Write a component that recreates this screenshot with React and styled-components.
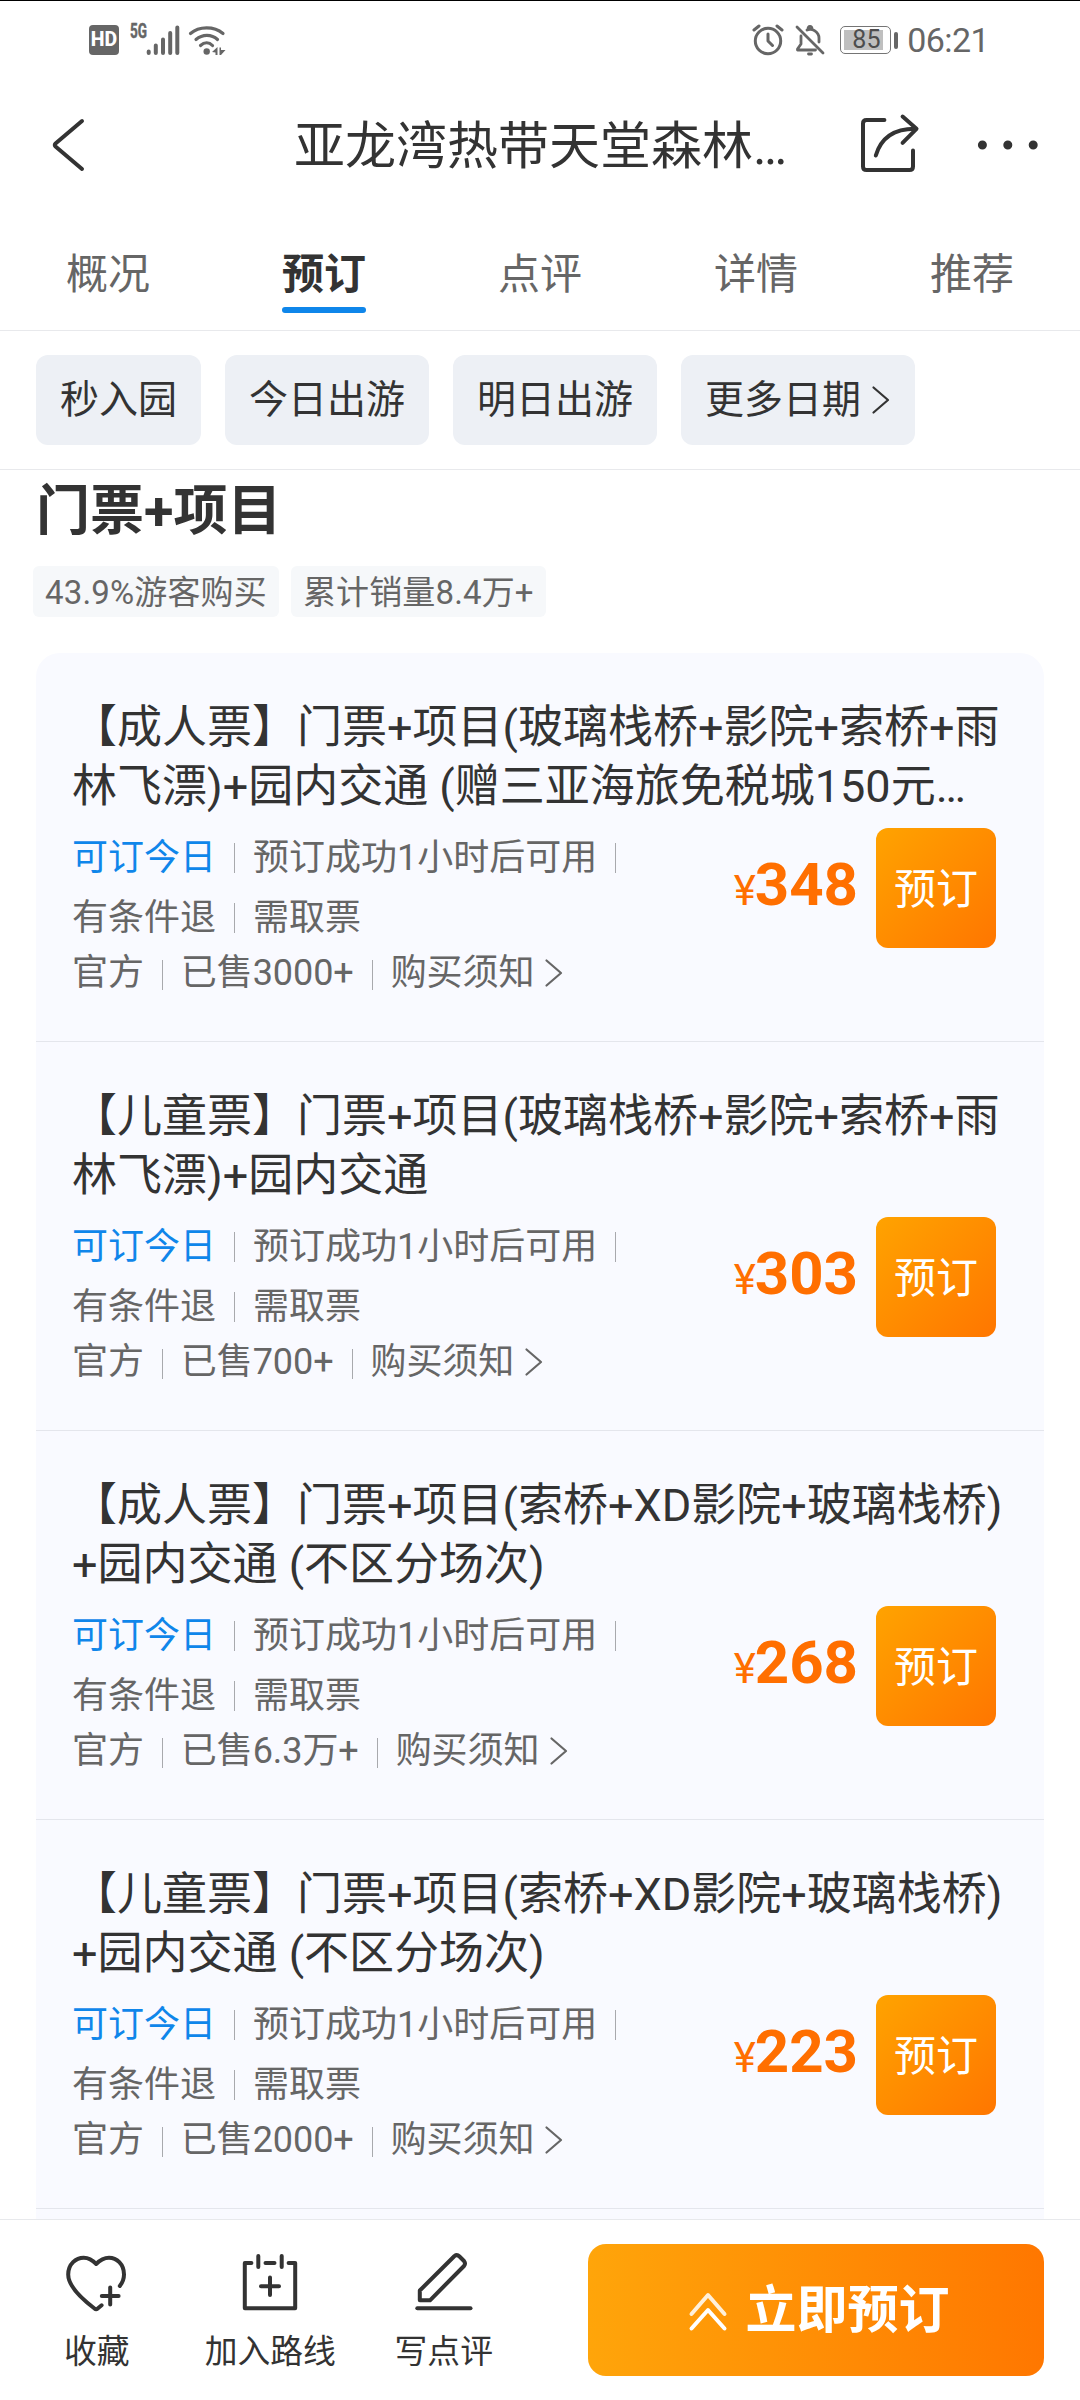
import React from 'react';
import styled, { createGlobalStyle } from 'styled-components';

const vars = {
  text: '#333',
  gray: '#666',
  blue: '#0f86ea',
  orange: '#ff6f00',
  line: '#e8e9ec',
  card: '#f9faff',
};

const GlobalStyle = createGlobalStyle`
  body {
    margin: 0;
    background: #fff;
    color: ${vars.text};
    font-family: Roboto, 'Noto Sans CJK SC', sans-serif;
  }

  * {
    box-sizing: border-box;
  }
`;

const Screen = styled.div`
  display: flex;
  flex-direction: column;
  width: 1080px;
  height: 2400px;
  overflow: hidden;
  border-top: 1px solid #000;
`;

const Icon = styled.svg`
  display: block;
  flex: none;
  overflow: visible;
  fill: none;
  stroke: ${props => props.$color || vars.text};
  stroke-width: ${props => props.$stroke || 4};
  stroke-linecap: round;
  stroke-linejoin: round;
`;

const StatusBar = styled.div`
  display: flex;
  justify-content: space-between;
  align-items: center;
  flex: none;
  height: 78px;
  padding: 0 91px 0 89px;
  color: ${vars.gray};
`;

const StatusGroup = styled.div`
  display: flex;
  align-items: center;
`;

const MutedIcon = styled(Icon)`
  margin: 0 14px 0 10px;
`;

const HdBadge = styled.div`
  width: 30px;
  height: 30px;
  margin-right: 11px;
  border-radius: 4px;
  background: ${vars.gray};
  color: #fff;
  font-size: 19.5px;
  font-weight: 800;
  line-height: 30px;
  text-align: center;
`;

const Battery = styled.div`
  display: flex;
  align-items: center;
  margin-right: 9px;

  &::after {
    content: '';
    width: 4px;
    height: 17px;
    margin-left: 3px;
    border-radius: 2px;
    background: ${vars.gray};
  }
`;

const BatteryBody = styled.div`
  width: 51px;
  height: 28px;
  padding: 3px;
  border: 1px solid #757575;
  border-radius: 5px;
`;

const BatteryLevel = styled.div`
  width: 39px;
  height: 20px;
  padding-left: 8px;
  background: #bfbfbf;
  color: #4d4d4d;
  font-size: 25px;
  line-height: 20px;
`;

const Clock = styled.span`
  font-size: 34px;
  line-height: 40px;
  letter-spacing: -0.6px;
`;

const Header = styled.header`
  display: grid;
  grid-template-columns: 222px 636px 222px;
  align-items: center;
  flex: none;
  height: 132px;
`;

const BackButton = styled.div`
  padding-left: 48px;
`;

const HeaderTitle = styled.div`
  margin-top: 3px;
  padding-left: 1px;
  font-size: 51px;
  line-height: 72px;
  text-align: center;
  white-space: nowrap;
`;

const HeaderActions = styled.div`
  display: flex;
  align-items: center;
  gap: 54px;
`;

const Tabs = styled.nav`
  display: flex;
  flex: none;
  height: 120px;
  padding-top: 34px;
  border-bottom: 1px solid ${vars.line};
`;

const Tab = styled.div`
  display: flex;
  flex-direction: column;
  align-items: center;
  width: 216px;
  font-size: 42px;
  line-height: 60px;
  font-weight: ${props => (props.$active ? 'bold' : 'normal')};
  color: ${props => (props.$active ? vars.text : vars.gray)};

  &::after {
    content: '';
    width: 84px;
    height: 6px;
    margin-top: 2px;
    border-radius: 3px;
    background: ${props => (props.$active ? vars.blue : 'transparent')};
  }
`;

const Filters = styled.div`
  display: flex;
  flex: none;
  gap: 24px;
  padding: 24px 36px;
  border-bottom: 1px solid ${vars.line};
`;

const Chip = styled.div`
  display: flex;
  align-items: center;
  height: 90px;
  padding: 0 24px;
  border-radius: 12px;
  background: #edf0f5;
  font-size: 39px;
  line-height: 90px;
`;

const Content = styled.main`
  display: flex;
  flex-direction: column;
  flex: 1;
  min-height: 0;
  padding: 9px 36px 0;
  overflow: hidden;
`;

const SectionTitle = styled.h2`
  margin: 0;
  font-size: 54px;
  font-weight: bold;
  line-height: 66px;
`;

const Tags = styled.div`
  display: flex;
  gap: 12px;
  margin: 21px 0 36px -3px;
`;

const Tag = styled.span`
  height: 51px;
  padding: 0 12px;
  border-radius: 6px;
  background: #f6f8fa;
  color: ${vars.gray};
  font-size: 33px;
  line-height: 53px;
  letter-spacing: 0.15px;
`;

const TicketList = styled.div`
  flex: 1;
  border-radius: 24px 24px 0 0;
  background: ${vars.card};
`;

const Ticket = styled.div`
  height: 389px;
  padding: 45px 48px 0 36px;
  border-bottom: 1px solid #e4e6ec;
`;

const TicketTitle = styled.div`
  font-size: 45px;
  line-height: 59px;
  white-space: nowrap;
`;

const TicketBody = styled.div`
  display: flex;
  justify-content: space-between;
  margin-top: 12px;
`;

const MetaRow = styled.div`
  display: flex;
  align-items: center;
  height: ${props => props.$height || 60}px;
  color: ${vars.gray};
  font-size: 36px;
  line-height: 54px;
  white-space: nowrap;
`;

const MetaText = styled.span`
  color: ${props => (props.$highlight ? vars.blue : 'inherit')};
`;

const NoteText = styled(MetaText)`
  display: flex;
  align-items: center;
  padding-bottom: 5px;
  letter-spacing: -0.08px;
`;

const Divider = styled.i`
  width: 1px;
  height: 30px;
  margin: 0 18px;
  background: #a8a9ad;
`;

const Purchase = styled.div`
  display: flex;
  gap: 18px;
`;

const Price = styled.div`
  color: ${vars.orange};
  font-size: 60px;
  font-weight: bold;
  line-height: 113px;
`;

const Currency = styled.span`
  margin-right: -1px;
  font-size: 42px;
  font-weight: normal;
`;

const BookButton = styled.div`
  width: 120px;
  height: 120px;
  border-radius: 12px;
  background: linear-gradient(135deg, #ffa300, #ff7600);
  color: #fff;
  font-size: 42px;
  line-height: 124px;
  text-align: center;
`;

const Footer = styled.footer`
  display: flex;
  justify-content: space-between;
  flex: none;
  height: 181px;
  padding: 0 36px 0 10px;
  border-top: 1px solid ${vars.line};
`;

const FooterActions = styled.div`
  display: flex;
  padding-top: 32px;
`;

const FooterAction = styled.div`
  display: flex;
  flex-direction: column;
  align-items: center;
  gap: 20px;
  width: 173.5px;
  font-size: 32.8px;
  line-height: 40px;
`;

const SubmitButton = styled.div`
  display: flex;
  align-items: center;
  justify-content: center;
  gap: 18px;
  width: 456px;
  height: 132px;
  margin-top: 24px;
  padding: 2px 0 0 7px;
  border-radius: 18px;
  background: linear-gradient(90deg, #ffa50a, #ff7700);
  color: #fff;
  font-size: 51px;
  font-weight: bold;
  line-height: 72px;
`;

const tabs = ['概况', '预订', '点评', '详情', '推荐'];

const tickets = [
  {
    title: ['【成人票】门票+项目(玻璃栈桥+影院+索桥+雨', '林飞漂)+园内交通 (赠三亚海旅免税城150元…'],
    sold: '已售3000+',
    price: 348,
  },
  {
    title: ['【儿童票】门票+项目(玻璃栈桥+影院+索桥+雨', '林飞漂)+园内交通'],
    sold: '已售700+',
    price: 303,
  },
  {
    title: ['【成人票】门票+项目(索桥+XD影院+玻璃栈桥)', '+园内交通 (不区分场次)'],
    sold: '已售6.3万+',
    price: 268,
  },
  {
    title: ['【儿童票】门票+项目(索桥+XD影院+玻璃栈桥)', '+园内交通 (不区分场次)'],
    sold: '已售2000+',
    price: 223,
  },
];

function Chevron({ color }) {
  return (
    <Icon width="30" height="30" viewBox="0 0 30 30" $stroke={2.2} $color={color}>
      <path d="M12.5 2.5L27 15L12.5 27.5" />
    </Icon>
  );
}

function SignalIcons() {
  return (
    <Icon width="98" height="32" viewBox="0 0 98 32" $color={vars.gray}>
      <text
        x="0"
        y="14"
        fill={vars.gray}
        stroke={vars.gray}
        strokeWidth="0.5"
        fontSize="19.5"
        fontWeight="bold"
        textLength="17"
        lengthAdjust="spacingAndGlyphs"
      >
        5G
      </text>
      <path d="M18.7 27.5V29M25.8 21.5V29M33 15.5V29M40.2 9V29M47.3 3.5V29" />
      <path
        strokeWidth="3.2"
        d="M60.5 9.5C69 2 84 2 93 9.5M66 15.5C72.5 10 81.5 10 87.5 15.5M70.5 21.5C74.5 17.8 79 17.8 82.5 21.5"
      />
      <circle cx="76.7" cy="27.5" r="3.2" fill={vars.gray} stroke="none" />
      <path
        stroke="none"
        fill={vars.gray}
        d="M82 28L87.5 23V31H85.5V28.5ZM89.5 23.5H91V26H95.5L91 31H89.5Z"
      />
    </Icon>
  );
}

function TicketItem({ title, sold, price }) {
  return (
    <Ticket>
      {title.map(line => (
        <TicketTitle key={line}>{line}</TicketTitle>
      ))}
      <TicketBody>
        <div>
          <MetaRow>
            <MetaText $highlight>可订今日</MetaText>
            <Divider />
            <MetaText>预订成功1小时后可用</MetaText>
            <Divider />
          </MetaRow>
          <MetaRow>
            <MetaText>有条件退</MetaText>
            <Divider />
            <MetaText>需取票</MetaText>
          </MetaRow>
          <MetaRow $height={54}>
            <NoteText>官方</NoteText>
            <Divider />
            <NoteText>{sold}</NoteText>
            <Divider />
            <NoteText>
              购买须知
              <Chevron color={vars.gray} />
            </NoteText>
          </MetaRow>
        </div>
        <Purchase>
          <Price>
            <Currency>¥</Currency>
            {price}
          </Price>
          <BookButton>预订</BookButton>
        </Purchase>
      </TicketBody>
    </Ticket>
  );
}

export default function App() {
  return (
    <Screen>
      <GlobalStyle />
      <StatusBar>
        <StatusGroup>
          <HdBadge>HD</HdBadge>
          <SignalIcons />
        </StatusGroup>
        <StatusGroup>
          <Icon width="32" height="32" viewBox="0 0 32 32" $stroke={3} $color={vars.gray}>
            <circle cx="16" cy="17" r="12.7" />
            <path d="M16 10V17L20.5 21.5M2 6L7 2M25 2L30 6" />
          </Icon>
          <MutedIcon width="32" height="32" viewBox="0 0 32 32" $stroke={2.8} $color={vars.gray}>
            <path d="M3 3L29 29M7 12V20L3.500 25V26H21.500M13 6C18 3.500 25 8 25 14V18M14 5.500C14 1.500 18 1.500 18 5M14.500 30H17.500" />
          </MutedIcon>
          <Battery>
            <BatteryBody>
              <BatteryLevel>85</BatteryLevel>
            </BatteryBody>
          </Battery>
          <Clock>06:21</Clock>
        </StatusGroup>
      </StatusBar>

      <Header>
        <BackButton>
          <Icon width="42" height="60" viewBox="0 0 42 60">
            <path d="M34 6L7.5 28.5Q6 30 7.5 31.5L34 54" />
          </Icon>
        </BackButton>
        <HeaderTitle>亚龙湾热带天堂森林…</HeaderTitle>
        <HeaderActions>
          <Icon width="64" height="64" viewBox="0 0 64 64">
            <path d="M26.4 7H8.5Q5 7 5 10.5V53.5Q5 57 8.5 57H51.5Q55 57 55 53.5V37.5" />
            <path d="M17.8 42.5C23 25 36 15.5 58 15.8M44.6 3.5L58.5 15.8L44.6 29.8" />
          </Icon>
          <Icon width="64" height="12" viewBox="0 0 64 12">
            <path strokeWidth="9" d="M6.4 6h.01M31.8 6h.01M57.2 6h.01" />
          </Icon>
        </HeaderActions>
      </Header>

      <Tabs>
        {tabs.map(name => (
          <Tab key={name} $active={name === '预订'}>
            {name}
          </Tab>
        ))}
      </Tabs>

      <Filters>
        <Chip>秒入园</Chip>
        <Chip>今日出游</Chip>
        <Chip>明日出游</Chip>
        <Chip>
          更多日期
          <Chevron />
        </Chip>
      </Filters>

      <Content>
        <SectionTitle>门票+项目</SectionTitle>
        <Tags>
          <Tag>43.9%游客购买</Tag>
          <Tag>累计销量8.4万+</Tag>
        </Tags>
        <TicketList>
          {tickets.map(ticket => (
            <TicketItem key={ticket.price} {...ticket} />
          ))}
        </TicketList>
      </Content>

      <Footer>
        <FooterActions>
          <FooterAction>
            <Icon width="60" height="60" viewBox="0 0 60 60">
              <path d="M52.8 34C56 30 57 27 57 22.5C57 12 49.5 5.7 42 5.7C37 5.7 33 8 29.1 12C25.5 8 21.5 5.7 16.7 5.7C9 5.7 1.2 12 1.2 22.5C1.2 34 15 47 27.5 56.5Q29.1 58 30.7 56.5L34.6 53.3" />
              <path d="M34.8 44H51.6M43.2 35.5V52.5" />
            </Icon>
            收藏
          </FooterAction>
          <FooterAction>
            <Icon width="60" height="60" viewBox="0 0 60 60">
              <path d="M11.4 11H4.8V56.3H55.2V11H48.6M25.5 11H34.5M18.3 4V15M41.7 4V15" />
              <path d="M21 34.3H39M30 25.5V43" />
            </Icon>
            加入路线
          </FooterAction>
          <FooterAction>
            <Icon width="60" height="60" viewBox="0 0 60 60">
              <path d="M5.8 38.5L40.5 4Q43 2 45.5 4.5L50 9Q52 11.5 50 14L16 48.3H5.8Z" />
              <path d="M3.3 56.3H56.5" />
            </Icon>
            写点评
          </FooterAction>
        </FooterActions>
        <SubmitButton>
          <Icon width="38" height="40" viewBox="0 0 38 40" $color="#fff">
            <path strokeOpacity="0.85" d="M2.5 23L19 4L35.5 23" />
            <path d="M2.5 37.5L19 19L35.5 37.5" />
          </Icon>
          立即预订
        </SubmitButton>
      </Footer>
    </Screen>
  );
}
